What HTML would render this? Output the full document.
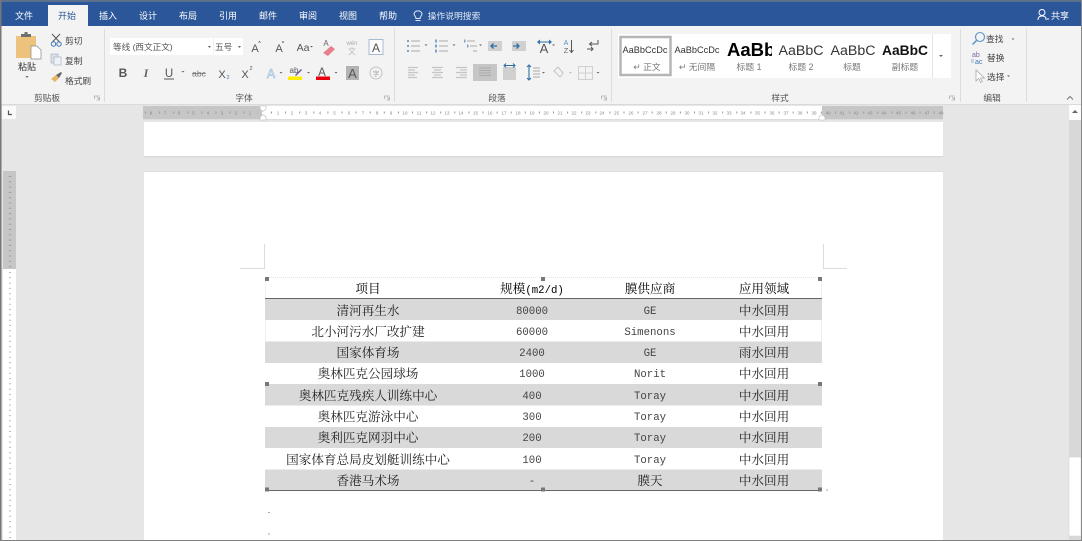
<!DOCTYPE html>
<html><head><meta charset="utf-8">
<style>
html,body{margin:0;padding:0;width:1082px;height:541px;overflow:hidden;background:#e6e6e6}
svg{display:block;filter:blur(.35px)}
text{font-family:"Liberation Sans","Noto Sans CJK SC",sans-serif;fill:#444;font-size:9px}
.t{fill:#fff;font-size:9px;text-anchor:middle}
.l{font-size:8.7px;fill:#444}
.g{font-size:8.7px;fill:#555;text-anchor:middle}
.r{font-size:4.5px;fill:#888;text-anchor:middle}
.c{font-family:"Liberation Serif","Noto Serif CJK SC",serif;font-size:12.6px;fill:#222;text-anchor:middle}
.m{font-family:"Liberation Mono","Noto Serif CJK SC",monospace;font-size:10.7px;fill:#444;text-anchor:middle}
.s{font-size:8.800px;fill:#777;text-anchor:middle}
.ar{fill:#666}
</style></head><body>
<svg width="1082" height="541" viewBox="0 0 1082 541" xmlns="http://www.w3.org/2000/svg">
<defs><clipPath id="c1"><rect x="724" y="36" width="48" height="28"/></clipPath></defs>
<!-- base -->
<rect width="1082" height="541" fill="#e6e6e6"/>
<rect width="1082" height="26" fill="#2b579a"/>
<rect width="1082" height="2" fill="#5c6f8c"/>
<rect y="26" width="1082" height="78" fill="#f3f3f3"/>
<rect y="104" width="1082" height="1" fill="#dadada"/>
<rect x="48" y="5" width="40" height="21" fill="#f3f3f3"/>
<!-- tabs -->
<text class="t" x="24" y="19">文件</text>
<text class="t" x="67" y="19" style="fill:#2b579a">开始</text>
<text class="t" x="108" y="19">插入</text>
<text class="t" x="148" y="19">设计</text>
<text class="t" x="188" y="19">布局</text>
<text class="t" x="228" y="19">引用</text>
<text class="t" x="268" y="19">邮件</text>
<text class="t" x="308" y="19">审阅</text>
<text class="t" x="348" y="19">视图</text>
<text class="t" x="388" y="19">帮助</text>
<path d="M415.500 20.500h5M416 18.500c0-2-2-2.600-2-5a4.400 4.400 0 0 1 8 0c0 2.400-2 3-2 5z" fill="none" stroke="#dfe7f2" stroke-width="1"/>
<text class="t" x="454" y="19" style="font-size:8.800px;fill:#dfe7f2">操作说明搜索</text>
<circle cx="1042" cy="12.500" r="3" fill="none" stroke="#fff"/>
<path d="M1038 20c0-3 1.500-4 4-4s3.500 1 4 2M1045 19h4" fill="none" stroke="#fff"/>
<text class="t" x="1060" y="19">共享</text>
<!-- separators -->
<g fill="#dcdcdc"><rect x="104" y="29" width="1" height="73"/><rect x="394" y="29" width="1" height="73"/><rect x="611" y="29" width="1" height="73"/><rect x="960" y="29" width="1" height="73"/><rect x="1026" y="29" width="1" height="73"/></g>
<!-- group labels -->
<text class="g" x="47" y="101">剪贴板</text>
<text class="g" x="244" y="101">字体</text>
<text class="g" x="497" y="101">段落</text>
<text class="g" x="780" y="101">样式</text>
<text class="g" x="992" y="101">编辑</text>
<g fill="none" stroke="#aaa" stroke-width=".8"><path d="M94.500 99v-3h5M97 97l2 2M99.500 97v3h-3"/><path d="M384.500 99v-3h5M387 97l2 2M389.500 97v3h-3"/><path d="M601.500 99v-3h5M604 97l2 2M606.500 97v3h-3"/><path d="M949.500 99v-3h5M952 97l2 2M954.500 97v3h-3"/></g>
<!-- paste -->
<rect x="16" y="36" width="20" height="22" fill="#edc27d"/>
<path d="M21 36v-2h3.500v-2h3v2H31v3H21z" fill="#6f6f6f"/>
<path d="M31 46h6l4 4v9H31z" fill="#fff" stroke="#888" stroke-width=".7"/>
<text x="27" y="70" style="font-size:9px;text-anchor:middle;fill:#333">粘贴</text>
<path d="M25.500 76h3l-1.500 2z" class="ar"/>
<!-- cut/copy/brush -->
<path d="M52 34l8 8.500M60 34l-8 8.500" stroke="#555" fill="none"/>
<circle cx="53.500" cy="44" r="2.200" fill="none" stroke="#3a78b5"/><circle cx="59" cy="44" r="2.200" fill="none" stroke="#3a78b5"/>
<text class="l" x="65" y="44">剪切</text>
<rect x="51" y="54" width="7" height="9" fill="#d8e2ec" stroke="#a8b4c0" stroke-width=".7"/>
<rect x="54" y="57" width="7" height="8" fill="#eef2f6" stroke="#a8b4c0" stroke-width=".7"/>
<text class="l" x="65" y="64">复制</text>
<path d="M51 79l5-4 3 3-4 4z" fill="#e7b663"/><path d="M56 75l5-3 1 1-3 5z" fill="#666"/>
<text class="l" x="65" y="84">格式刷</text>
<!-- font combos -->
<rect x="110" y="38" width="103" height="17" fill="#fff"/>
<rect x="214" y="38" width="29" height="17" fill="#fff"/>
<text x="113" y="50" style="font-size:8.600px;fill:#555">等线 (西文正文)</text>
<path d="M208 46h3l-1.500 2z" class="ar"/>
<text x="215" y="50" style="font-size:8.600px;fill:#555">五号</text>
<path d="M238 46h3l-1.500 2z" class="ar"/>
<text x="255" y="52" style="font-size:11px;fill:#555;text-anchor:middle">A</text><path d="M258.500 42.500l1 -1 1 1" stroke="#555" fill="none" stroke-width=".8"/>
<text x="279" y="52" style="font-size:11px;fill:#555;text-anchor:middle">A</text><path d="M282 41.500l1 1 1-1" stroke="#555" fill="none" stroke-width=".8"/>
<text x="303" y="51" style="font-size:10.500px;fill:#555;text-anchor:middle">Aa</text>
<path d="M310 46h3l-1.500 1.500z" class="ar"/>
<text x="326" y="46" style="font-size:8px;fill:#666;text-anchor:middle">A</text>
<path d="M323 53l8-7 4 3-7 7z" fill="#e8808c"/>
<text x="352" y="45" style="font-size:6px;fill:#aaa;text-anchor:middle">wén</text>
<text x="352" y="54" style="font-size:8px;fill:#bbb;text-anchor:middle">文</text>
<rect x="369" y="39.500" width="14" height="15" fill="#fbfbfb" stroke="#a9bcd2"/>
<text x="376" y="52" style="font-size:12px;fill:#555;text-anchor:middle">A</text>
<!-- font row 2 -->
<text x="123" y="77" style="font-size:12px;font-weight:bold;fill:#555;text-anchor:middle">B</text>
<text x="146" y="77" style="font-size:12px;font-style:italic;font-weight:bold;fill:#666;text-anchor:middle;font-family:'Liberation Serif',serif">I</text>
<text x="169" y="77" style="font-size:11.500px;fill:#555;text-anchor:middle">U</text><rect x="164" y="78.500" width="10" height="1" fill="#555"/>
<path d="M181.500 71h3l-1.500 1.500z" class="ar"/>
<text x="199" y="76.500" style="font-size:8.500px;fill:#777;text-anchor:middle">abc</text><rect x="192" y="73" width="14" height=".8" fill="#777"/>
<text x="222" y="78" style="font-size:11px;fill:#555;text-anchor:middle">X</text><text x="228" y="79" style="font-size:5.500px;fill:#3a78b5;text-anchor:middle">2</text>
<text x="245" y="78" style="font-size:11px;fill:#555;text-anchor:middle">X</text><text x="251" y="70" style="font-size:5.500px;fill:#555;text-anchor:middle">2</text>
<text x="271" y="78" style="font-size:12.500px;fill:#fff;stroke:#8fb5dc;stroke-width:.6;text-anchor:middle">A</text>
<path d="M279.500 72h3l-1.500 1.500z" class="ar"/>
<text x="294" y="73" style="font-size:8px;fill:#555;text-anchor:middle">ab</text>
<path d="M295 75l6-6 1 1-6 6z" fill="#6a5a96"/>
<rect x="288" y="76.500" width="14" height="3.500" fill="#ffee00"/>
<path d="M307 72h3l-1.500 1.500z" class="ar"/>
<text x="322" y="76" style="font-size:11.500px;fill:#555;text-anchor:middle">A</text>
<rect x="316" y="76.500" width="14" height="3.500" fill="#e8000f"/>
<path d="M334.500 72h3l-1.500 1.500z" class="ar"/>
<rect x="346" y="66" width="13" height="14" fill="#b3b3b3"/>
<text x="352.500" y="78" style="font-size:13px;fill:#555;text-anchor:middle">A</text>
<circle cx="376" cy="73" r="6" fill="none" stroke="#c4c4c4"/>
<text x="376" y="76" style="font-size:7px;fill:#aaa;text-anchor:middle">字</text>
<!-- para row1 -->
<g stroke="#aaa" stroke-width="1" fill="none">
<path d="M411 41h9M411 46h9M411 51h9"/>
<path d="M439 41h9M439 46h9M439 51h9"/>
<path d="M467 41h8M470 46h7M473 51h4"/>
</g>
<g fill="#7fa3c7"><rect x="407" y="40" width="2" height="2"/><rect x="407" y="45" width="2" height="2"/><rect x="407" y="50" width="2" height="2"/><rect x="435" y="39.500" width="2" height="3"/><rect x="435" y="44.500" width="2" height="3"/><rect x="435" y="49.500" width="2" height="3"/><rect x="464" y="39.500" width="1.500" height="3"/><rect x="467" y="44.500" width="1.500" height="3"/></g>
<g class="ar"><path d="M424.500 44.500h3l-1.500 1.500z"/><path d="M452.500 44.500h3l-1.500 1.500z"/><path d="M479 44.500h3l-1.500 1.500z"/><path d="M552 44.500h3l-1.500 1.500z"/></g>
<rect x="488" y="41" width="14" height="10" fill="#d0d0d0"/>
<path d="M497 46h-6M493.500 43.500l-2.500 2.500 2.500 2.500" stroke="#2f6ea8" stroke-width="1.300" fill="none"/>
<rect x="512" y="41" width="14" height="10" fill="#d0d0d0"/>
<path d="M513 46h6M516.500 43.500l2.500 2.500-2.500 2.500" stroke="#2f6ea8" stroke-width="1.300" fill="none"/>
<text x="544" y="53" style="font-size:13px;fill:#555;text-anchor:middle">A</text>
<path d="M537 42l3-2.500v5zM552 42l-3-2.500v5z" fill="#2f6ea8"/><rect x="540" y="41.500" width="9" height="1" fill="#2f6ea8"/>
<text x="566" y="45" style="font-size:7px;fill:#5c8fc0;text-anchor:middle">A</text>
<text x="566" y="53" style="font-size:7.500px;fill:#666;text-anchor:middle">Z</text>
<path d="M571.500 40v12M569.500 50l2 2.500 2-2.500" stroke="#555" fill="none"/>
<path d="M598 40v4h-8M592 42l-2.500 2 2.500 2" stroke="#555" fill="none"/>
<path d="M587 49h6M591 47l2 2-2 2" stroke="#555" fill="none"/>
<!-- para row2 -->
<rect x="473" y="64" width="24" height="17" fill="#c6c6c6"/>
<g stroke="#c4c4c4" stroke-width="1.200" fill="none">
<path d="M408 67.500h10M408 70h7M408 72.500h10M408 75h7M408 77.500h9"/>
<path d="M432 67.500h11M434 70h7M432 72.500h11M434 75h7M432 77.500h11"/>
<path d="M456 67.500h11M460 70h7M456 72.500h11M460 75h7M456 77.500h11"/>
</g>
<path d="M479 68h12M479 70.500h12M479 73h12M479 75.500h12" stroke="#aaa" fill="none"/>
<rect x="503" y="67" width="13" height="13" fill="#d0d0d0"/>
<path d="M504 65.500h11M506 63.500l-2 2 2 2M513 63.500l2 2-2 2" stroke="#2f6ea8" fill="none"/>
<path d="M529 65v15M527 67l2-2 2 2M527 78l2 2 2-2" stroke="#2f6ea8" stroke-width="1.100" fill="none"/>
<path d="M533 68h7M533 71h7M533 74h7M533 77h7" stroke="#aaa" fill="none"/>
<path d="M542 72h3l-1.500 1.500z" class="ar"/>
<path d="M554 71l4-4 5 6-3 4z" fill="none" stroke="#c4c4c4"/>
<path d="M569 72h3l-1.500 1.500z" fill="#bbb"/>
<path d="M578.500 66.500h14v13h-14zM585.500 66.500v13M578.500 73h14" stroke="#d0d0d0" fill="none"/>
<path d="M596.500 72h3l-1.500 1.500z" class="ar"/>
<!-- style gallery -->
<rect x="618" y="34" width="333" height="44" fill="#fff"/>
<rect x="620.500" y="37" width="50" height="38" fill="#fff" stroke="#b5b5b5" stroke-width="2.500"/>
<rect x="932" y="34" width="1" height="44" fill="#e4e4e4"/>
<path d="M939 55h4l-2 2z" class="ar"/>
<text x="645" y="53" style="font-size:9.200px;text-anchor:middle;fill:#333">AaBbCcDc</text>
<text x="697" y="53" style="font-size:9.200px;text-anchor:middle;fill:#333">AaBbCcDc</text>
<text x="727" y="56" clip-path="url(#c1)" style="font-size:18.500px;font-weight:bold;fill:#000">AaBbC</text>
<text x="801" y="55" style="font-size:14.200px;text-anchor:middle;fill:#333">AaBbC</text>
<text x="853" y="55" style="font-size:14.200px;text-anchor:middle;fill:#333">AaBbC</text>
<text x="905" y="55" style="font-size:13.800px;font-weight:bold;text-anchor:middle;fill:#111">AaBbC</text>
<text class="s" x="647" y="70">↵ 正文</text>
<text class="s" x="697" y="70">↵ 无间隔</text>
<text class="s" x="749" y="70">标题 1</text>
<text class="s" x="801" y="70">标题 2</text>
<text class="s" x="852" y="70">标题</text>
<text class="s" x="905" y="70">副标题</text>
<!-- editing -->
<circle cx="980" cy="37" r="4.500" fill="none" stroke="#5a94cc" stroke-width="1.100"/>
<path d="M976.500 40.500l-4 4" stroke="#5a94cc" stroke-width="1.500"/>
<text class="l" x="986" y="42">查找</text>
<path d="M1011.500 38.500h3l-1.500 1.500z" class="ar"/>
<text x="972" y="57" style="font-size:7px;fill:#8564a8">ab</text>
<text x="975" y="64" style="font-size:7px;fill:#3a78b5">ac</text>
<path d="M971 60h3M971 62h3" stroke="#3a78b5" stroke-width=".6"/>
<text class="l" x="987" y="61">替换</text>
<path d="M976 70v11l2.800-2.500 1.800 4 1.700-.8-1.800-3.700h3.800z" fill="#fff" stroke="#aaa" stroke-width=".8"/>
<text class="l" x="987" y="80">选择</text>
<path d="M1007 75.500h3l-1.500 1.500z" class="ar"/>
<path d="M1067 99.500l3-3 3 3" fill="none" stroke="#777"/>
<!-- corner -->
<rect x="2" y="106" width="14" height="13" fill="#fafafa"/>
<path d="M8.500 110.500v4h3.500" stroke="#555" stroke-width="1.200" fill="none"/>
<!-- h ruler -->
<rect x="143" y="106" width="119" height="13" fill="#c6c6c6"/>
<rect x="262" y="106" width="560" height="13" fill="#fff"/>
<rect x="822" y="106" width="121" height="13" fill="#c6c6c6"/>
<path d="M145 112.500H258M271 112.500H943" stroke="#999" stroke-width="2" stroke-dasharray="1 13.100" fill="none"/>
<path d="M143 119.500H943" stroke="#dcdcdc"/>
<g>
<text class="r" x="250" y="114.500">1</text><text class="r" x="236" y="114.500">2</text><text class="r" x="222" y="114.500">3</text><text class="r" x="208" y="114.500">4</text><text class="r" x="193.500" y="114.500">5</text><text class="r" x="179" y="114.500">6</text><text class="r" x="165" y="114.500">7</text><text class="r" x="151" y="114.500">8</text>
<text class="r" x="278" y="114.500">1</text><text class="r" x="292" y="114.500">2</text><text class="r" x="306" y="114.500">3</text><text class="r" x="320" y="114.500">4</text><text class="r" x="334.500" y="114.500">5</text><text class="r" x="349" y="114.500">6</text><text class="r" x="363" y="114.500">7</text><text class="r" x="377" y="114.500">8</text><text class="r" x="391" y="114.500">9</text><text class="r" x="405" y="114.500">10</text>
<text class="r" x="419" y="114.500">11</text><text class="r" x="433" y="114.500">12</text><text class="r" x="447" y="114.500">13</text><text class="r" x="461" y="114.500">14</text><text class="r" x="475.500" y="114.500">15</text><text class="r" x="490" y="114.500">16</text><text class="r" x="504" y="114.500">17</text><text class="r" x="518" y="114.500">18</text><text class="r" x="532" y="114.500">19</text><text class="r" x="546" y="114.500">20</text>
<text class="r" x="560" y="114.500">21</text><text class="r" x="574" y="114.500">22</text><text class="r" x="588" y="114.500">23</text><text class="r" x="602" y="114.500">24</text><text class="r" x="616.500" y="114.500">25</text><text class="r" x="631" y="114.500">26</text><text class="r" x="645" y="114.500">27</text><text class="r" x="659" y="114.500">28</text><text class="r" x="673" y="114.500">29</text><text class="r" x="687" y="114.500">30</text>
<text class="r" x="701" y="114.500">31</text><text class="r" x="715" y="114.500">32</text><text class="r" x="729" y="114.500">33</text><text class="r" x="743" y="114.500">34</text><text class="r" x="757.500" y="114.500">35</text><text class="r" x="772" y="114.500">36</text><text class="r" x="786" y="114.500">37</text><text class="r" x="800" y="114.500">38</text><text class="r" x="814" y="114.500">39</text><text class="r" x="828" y="114.500">40</text>
<text class="r" x="842" y="114.500">41</text><text class="r" x="856" y="114.500">42</text><text class="r" x="870" y="114.500">43</text><text class="r" x="884" y="114.500">44</text><text class="r" x="898.500" y="114.500">45</text><text class="r" x="913" y="114.500">46</text><text class="r" x="927" y="114.500">47</text><text class="r" x="941" y="114.500">48</text>
</g>
<path d="M260 106h6v3l-3 2.500-3-2.500z" fill="#fff" stroke="#bbb" stroke-width=".6"/>
<path d="M260 120v-3l3-2.500 3 2.500v3z" fill="#fff" stroke="#bbb" stroke-width=".6"/>
<path d="M819 120v-3l3-2.500 3 2.500v3z" fill="#fff" stroke="#bbb" stroke-width=".6"/>
<!-- pages -->
<rect x="144" y="122" width="799" height="34" fill="#fff"/>
<rect x="144" y="156" width="799" height="1.500" fill="#dadada"/>
<rect x="144" y="171" width="799" height="1" fill="#dedede"/>
<rect x="144" y="172" width="799" height="369" fill="#fff"/>
<!-- v ruler -->
<rect x="3" y="171" width="13" height="98" fill="#c6c6c6"/>
<rect x="3" y="269" width="13" height="272" fill="#fff"/>
<path d="M10 176V269" stroke="#a0a0a0" stroke-width="2.500" stroke-dasharray="1 4.300" fill="none"/>
<path d="M10 272V541" stroke="#bbb" stroke-width="2" stroke-dasharray="1 4.300" fill="none"/>
<!-- scrollbar -->
<rect x="1069" y="105" width="12" height="436" fill="#d8d8d8"/>
<rect x="1069" y="105" width="12" height="15" fill="#fcfcfc"/>
<path d="M1072 113h6l-3-3z" fill="#666"/>
<rect x="1069" y="457" width="12" height="79" fill="#fff" stroke="#d0d0d0" stroke-width=".5"/>
<!-- crop marks -->
<path d="M264.500 244v24.500H240M823.500 244v24.500H847" fill="none" stroke="#dcdcdc"/>
<!-- table -->
<path d="M265 277.500H822" stroke="#e4e4e4" stroke-dasharray="1 1"/>
<path d="M265.500 277V298M821.500 277V298M265.500 320V341M821.500 320V341" stroke="#eee"/>
<rect x="265" y="299" width="557" height="21" fill="#d9d9d9"/>
<rect x="265" y="341.500" width="557" height="21.500" fill="#d9d9d9"/>
<rect x="265" y="384" width="557" height="21.500" fill="#d9d9d9"/>
<rect x="265" y="427" width="557" height="21" fill="#d9d9d9"/>
<rect x="265" y="469.500" width="557" height="21" fill="#d9d9d9"/>
<rect x="265" y="298" width="557" height="1" fill="#666"/>
<rect x="265" y="490" width="557" height="1" fill="#666"/>
<text class="c" x="368" y="293" style="fill:#000">项目</text>
<text x="532" y="293" style="text-anchor:middle;fill:#000"><tspan style="font-family:'Noto Serif CJK SC',serif;font-size:12.600px">规模</tspan><tspan style="font-family:'Liberation Mono',monospace;font-size:10.700px;fill:#000">(m2/d)</tspan></text>
<text class="c" x="650" y="293" style="fill:#000">膜供应商</text>
<text class="c" x="764" y="293" style="fill:#000">应用领域</text>

<text class="c" x="368" y="315">清河再生水</text><text class="m" x="532" y="314">80000</text><text class="m" x="650" y="314">GE</text><text class="c" x="764" y="315">中水回用</text>
<text class="c" x="368" y="336">北小河污水厂改扩建</text><text class="m" x="532" y="335">60000</text><text class="m" x="650" y="335">Simenons</text><text class="c" x="764" y="336">中水回用</text>
<text class="c" x="368" y="357">国家体育场</text><text class="m" x="532" y="356">2400</text><text class="m" x="650" y="356">GE</text><text class="c" x="764" y="357">雨水回用</text>
<text class="c" x="368" y="378">奥林匹克公园球场</text><text class="m" x="532" y="377">1000</text><text class="m" x="650" y="377">Norit</text><text class="c" x="764" y="378">中水回用</text>
<text class="c" x="368" y="400">奥林匹克残疾人训练中心</text><text class="m" x="532" y="399">400</text><text class="m" x="650" y="399">Toray</text><text class="c" x="764" y="400">中水回用</text>
<text class="c" x="368" y="421">奥林匹克游泳中心</text><text class="m" x="532" y="420">300</text><text class="m" x="650" y="420">Toray</text><text class="c" x="764" y="421">中水回用</text>
<text class="c" x="368" y="442">奥利匹克网羽中心</text><text class="m" x="532" y="441">200</text><text class="m" x="650" y="441">Toray</text><text class="c" x="764" y="442">中水回用</text>
<text class="c" x="368" y="464">国家体育总局皮划艇训练中心</text><text class="m" x="532" y="463">100</text><text class="m" x="650" y="463">Toray</text><text class="c" x="764" y="464">中水回用</text>
<text class="c" x="368" y="485">香港马术场</text><text class="m" x="532" y="484">-</text><text class="c" x="650" y="485">膜天</text><text class="c" x="764" y="485">中水回用</text>
<!-- handles -->
<g fill="#777"><rect x="265" y="277" width="4" height="4"/><rect x="541" y="277" width="4" height="4"/><rect x="818" y="277" width="4" height="4"/><rect x="265" y="382" width="4" height="4"/><rect x="818" y="382" width="4" height="4"/><rect x="265" y="487.500" width="4" height="4"/><rect x="541" y="487.500" width="4" height="4"/><rect x="818" y="487.500" width="4" height="4"/></g>
<g fill="#aaa"><rect x="826" y="489.500" width="2" height="1"/><rect x="268" y="512" width="2" height="1"/><rect x="268" y="533.500" width="2" height="1"/></g>
<!-- window border -->
<rect x="0" y="0" width="1.500" height="541" fill="#777"/>
<rect x="1081" y="0" width="1" height="541" fill="#888"/>
<rect x="0" y="540" width="1082" height="1" fill="#808080"/>
</svg>
</body></html>
